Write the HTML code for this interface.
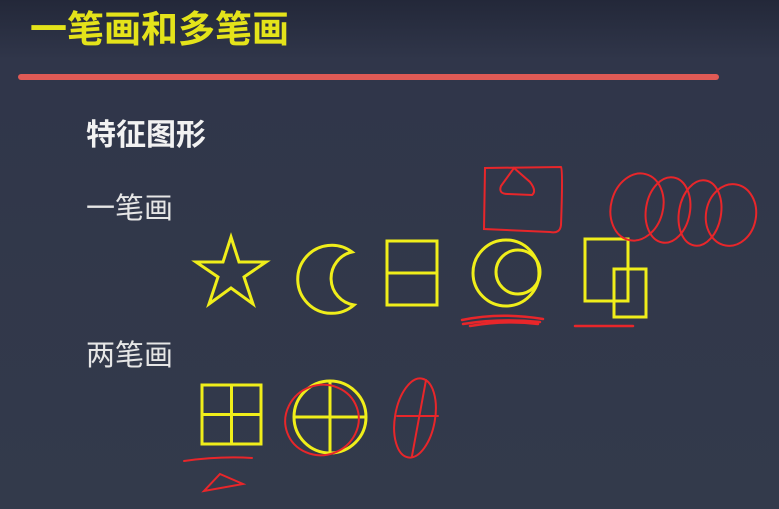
<!DOCTYPE html>
<html><head><meta charset="utf-8"><style>
html,body{margin:0;padding:0;}
body{width:779px;height:509px;overflow:hidden;position:relative;background:linear-gradient(#232839 0px,#30364a 60px,#333a4b 509px);font-family:"Liberation Sans","Noto Sans CJK SC",sans-serif;}
.t{position:absolute;white-space:nowrap;line-height:1;}
</style></head><body>
<div class="t" style="left:30px;top:11px;font-size:37px;font-weight:bold;color:#e4e31a;">一笔画和多笔画</div>
<div style="position:absolute;left:18px;top:74px;width:701px;height:6px;border-radius:3px;background:#e05a55;"></div>
<div class="t" style="left:86px;top:121px;font-size:30px;font-weight:bold;color:#f2f2f2;">特征图形</div>
<div class="t" style="left:86px;top:195px;font-size:29px;color:#e6e6e6;">一笔画</div>
<div class="t" style="left:86px;top:342px;font-size:29px;color:#e6e6e6;">两笔画</div>
<svg width="779" height="509" style="position:absolute;left:0;top:0" fill="none">
<g stroke="#f0ee1a" stroke-width="3">
<polygon points="231,237 239,262 266,262 244,277 253,304 231,288 209,304 218,277 196,262 223,262" stroke-linejoin="miter"/>
<path d="M352,252 A34,34 0 1 0 354,305 A27,27 0 0 1 352,252 Z"/>
<rect x="387" y="241" width="50" height="64"/><line x1="387" y1="273" x2="437" y2="273"/>
<circle cx="506" cy="273" r="33"/><circle cx="518" cy="272" r="22"/>
<rect x="585" y="239" width="43" height="62"/><rect x="614" y="269" width="32" height="48"/>
<rect x="202" y="385" width="59" height="59"/><line x1="231.5" y1="385" x2="231.5" y2="444"/><line x1="202" y1="414.5" x2="261" y2="414.5"/>
<circle cx="330" cy="417" r="36"/><line x1="330" y1="381" x2="330" y2="453"/><line x1="294" y1="417" x2="366" y2="417"/>
</g>
<g stroke="#e8262a" stroke-width="2" stroke-linecap="round">
<path d="M485,168 L561,167 Q563,170 561,225 Q560,234 550,232 L484,229 Z"/>
<path d="M514,168 L501,186 Q498,194 508,194 L532,195 Q537,191 530,182 Z"/>
<ellipse cx="637" cy="207" rx="26" ry="34" transform="rotate(15 637 207)"/>
<ellipse cx="668" cy="210" rx="22" ry="33" transform="rotate(10 668 210)"/>
<ellipse cx="700" cy="213" rx="21" ry="33" transform="rotate(10 700 213)"/>
<ellipse cx="731" cy="215" rx="25" ry="31" transform="rotate(10 731 215)"/>
<path d="M462,320 Q500,312 543,319 M463,324 Q500,318 540,322 M470,326 Q505,320 538,324" stroke-width="2.5"/>
<path d="M575,326 L633,326" stroke-width="2.5"/>
<ellipse cx="322" cy="420" rx="37" ry="35" transform="rotate(-20 322 420)"/>
<ellipse cx="415" cy="418" rx="20" ry="40" transform="rotate(10 415 418)"/>
<path d="M397,416 L438,416 M426,380 L412,456"/>
<path d="M184,461 Q220,456 252,458"/>
<path d="M220,474 L243,484 L204,491 Z"/>
</g>
</svg>
</body></html>
